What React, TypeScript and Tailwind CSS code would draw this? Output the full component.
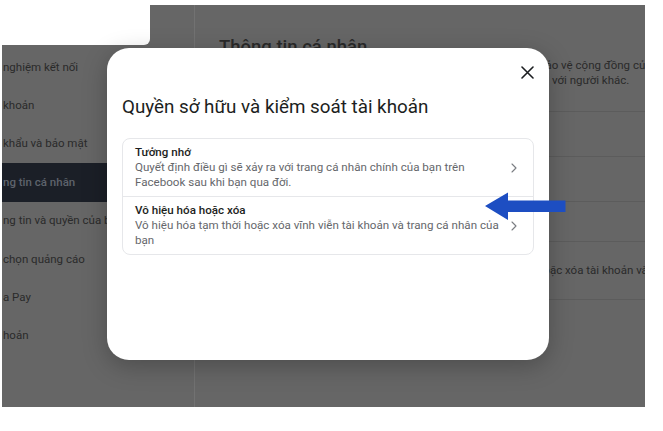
import React from 'react';

const sidebarItems = [
  'nghiệm kết nối',
  'khoản',
  'khẩu và bảo mật',
  'ng tin cá nhân',
  'ng tin và quyền của bạn',
  'chọn quảng cáo',
  'a Pay',
  'hoản',
];

const options = [
  {
    title: 'Tưởng nhớ',
    desc: 'Quyết định điều gì sẽ xảy ra với trang cá nhân chính của bạn trên Facebook sau khi bạn qua đời.',
  },
  {
    title: 'Vô hiệu hóa hoặc xóa',
    desc: 'Vô hiệu hóa tạm thời hoặc xóa vĩnh viễn tài khoản và trang cá nhân của bạn',
  },
];

const Chevron = () => (
  <svg width="6" height="10" viewBox="0 0 6 10" fill="none" className="shrink-0">
    <path d="M1 1l4 4-4 4" stroke="#7a7d82" strokeWidth="1.1" strokeLinecap="round" strokeLinejoin="round" />
  </svg>
);

export default function App() {
  return (
    <div
      className="relative w-[663px] h-[431px] bg-white overflow-hidden"
      style={{ fontFamily: 'Roboto, "Noto Sans", sans-serif' }}
    >
      {/* dimmed page behind the dialog */}
      <div className="ml-[2px] mt-[5px] w-[643px] h-[402px] bg-[#666666] flex overflow-hidden">
        {/* Sidebar */}
        <div className="w-[193px] shrink-0 border-r border-[#727272] pt-[43px]">
          {sidebarItems.map((item, i) => (
            <div
              key={i}
              className={`h-[38.4px] flex items-center pl-[1px] text-[11.5px] whitespace-nowrap ${
                i === 3 ? 'bg-[#1b1f27] text-[#5e636c] font-medium' : 'text-[#2a2a2a]'
              }`}
            >
              {item}
            </div>
          ))}
        </div>

        {/* Content */}
        <div className="flex-1 pl-[24px] text-[#2a2a2a]">
          <div className="pt-[31px] text-[18.5px] leading-[22px] font-medium">Thông tin cá nhân</div>
          <div className="border-b border-[#5c5c5c] pb-[23px] text-[11.5px] leading-[15px] whitespace-nowrap">
            <p className="pl-[320px]">bảo vệ cộng đồng của</p>
            <p className="pl-[333px]">với người khác.</p>
          </div>
          <div className="h-[45px] border-b border-[#5c5c5c]" />
          <div className="h-[45px] border-b border-[#5c5c5c]" />
          <div className="h-[40px] border-b border-[#5c5c5c]" />
          <div className="h-[58px] border-b border-[#5c5c5c] flex items-center text-[11.5px] whitespace-nowrap">
            <span className="pl-[318px]">hoặc xóa tài khoản và</span>
          </div>
        </div>
      </div>

      {/* white patch top-left */}
      <div className="absolute left-0 top-0 w-[150px] h-[45px] bg-white rounded-br-[6px]" />

      {/* Dialog */}
      <div className="absolute left-[107px] top-[48px] w-[442px] h-[312px] bg-white rounded-[22px] shadow-[0_6px_24px_rgba(0,0,0,0.25)] px-[15px]">
        <div className="flex justify-end pt-[18px]">
          <svg width="13" height="13" viewBox="0 0 13 13">
            <path d="M1 1l11 11M12 1L1 12" stroke="#1c1e21" strokeWidth="1.6" strokeLinecap="round" />
          </svg>
        </div>
        <h2 className="mt-[16px] text-[18.8px] leading-[24px] text-[#1c1e21]">
          Quyền sở hữu và kiểm soát tài khoản
        </h2>
        <div className="mt-[19px] border border-[#e6e7ea] rounded-[8px]">
          {options.map((o, i) => (
            <div
              key={i}
              className={`flex items-center gap-[9px] pl-[12px] pr-[16px] py-[6px] ${
                i === 0 ? 'border-b border-[#e6e7ea]' : ''
              }`}
            >
              <div className="flex-1">
                <div className="text-[11.6px] leading-[15px] text-[#1c1e21] font-medium">{o.title}</div>
                <div className="text-[11.6px] leading-[15px] text-[#65676b]">{o.desc}</div>
              </div>
              <Chevron />
            </div>
          ))}
        </div>
      </div>

      {/* Arrow annotation */}
      <svg className="absolute left-[485px] top-[192px]" width="81" height="29" viewBox="0 0 81 29">
        <path d="M0 14L23 0.5V8.5H80.5V20H23V28Z" fill="#1d4ec2" />
      </svg>
    </div>
  );
}
